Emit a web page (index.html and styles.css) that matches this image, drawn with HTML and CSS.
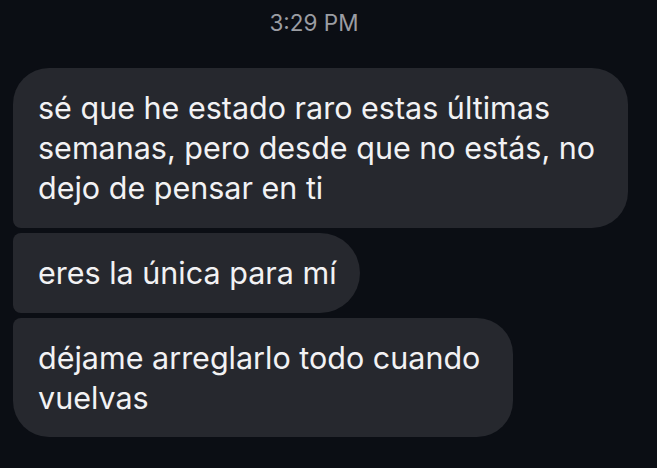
FILE: index.html
```html
<!DOCTYPE html>
<html lang="es">
<head>
    <meta charset="UTF-8">
    <meta name="viewport" content="width=device-width, initial-scale=1.0">
    <title>Mensajes</title>
    <link rel="stylesheet" href="styles.css">
</head>
<body>
    <div class="thread">
        <div class="timestamp">3:29 PM</div>
        <div class="messages">
            <div class="bubble bubble-first">sé que he estado raro estas últimas<br>semanas, pero desde que no estás, no<br>dejo de pensar en ti</div>
            <div class="bubble bubble-middle">eres la única para mí</div>
            <div class="bubble bubble-last">déjame arreglarlo todo cuando<br>vuelvas</div>
        </div>
    </div>
</body>
</html>
```

FILE: styles.css
```css
body {
    margin: 0;
    padding: 0;
    background: #0b0e14;
    font-family: Inter, "Noto Sans", sans-serif;
}

/* Conversation */
.thread {
    padding: 10px 0 0 13px;
}

.timestamp {
    width: 602px;
    text-align: center;
    color: #9b9da3;
    font-size: 22.5px;
    line-height: 26px;
    margin-bottom: 32px;
}

.messages {
    display: flex;
    flex-direction: column;
    align-items: flex-start;
    gap: 5px;
}

/* Bubbles */
.bubble {
    background: #26282e;
    color: #f2f2f4;
    font-size: 30.5px;
    line-height: 40px;
    padding: 20px 33px 20px 25px;
    border-radius: 36px;
}

.bubble-first {
    border-bottom-left-radius: 8px;
}

.bubble-middle {
    padding-right: 23px;
    border-radius: 8px 40px 40px 8px;
}

.bubble-last {
    padding-bottom: 19px;
    border-top-left-radius: 8px;
}
```
